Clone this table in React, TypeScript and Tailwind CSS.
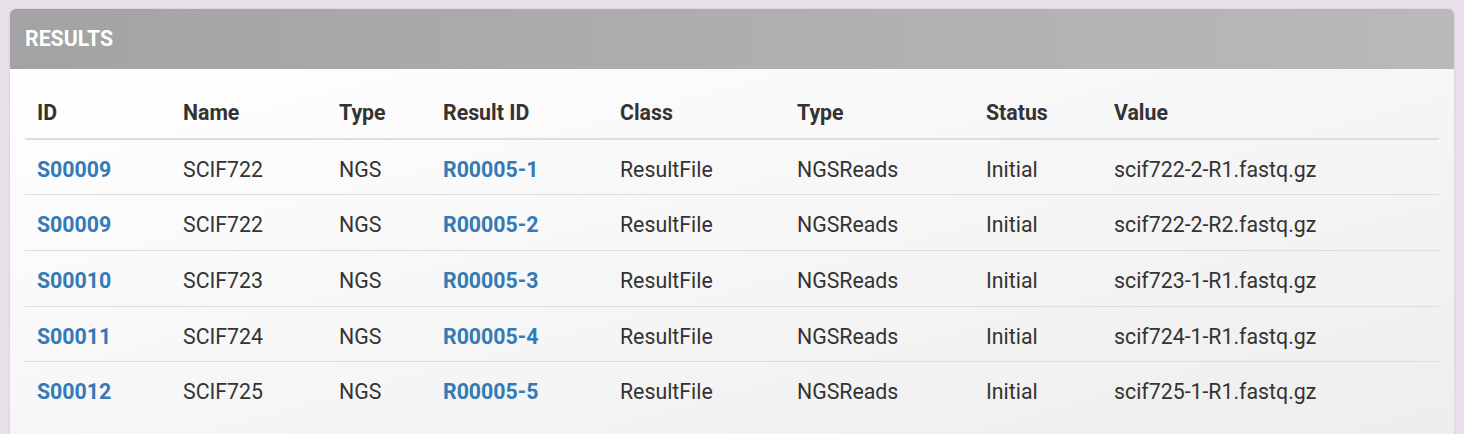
import React from 'react'

interface IResultRow {
    sampleId: string,
    name: string,
    type: string,
    resultId: string,
    className: string,
    resultType: string,
    status: string,
    value: string
}

const rows: IResultRow[] = [
    { sampleId: 'S00009', name: 'SCIF722', type: 'NGS', resultId: 'R00005-1', className: 'ResultFile', resultType: 'NGSReads', status: 'Initial', value: 'scif722-2-R1.fastq.gz' },
    { sampleId: 'S00009', name: 'SCIF722', type: 'NGS', resultId: 'R00005-2', className: 'ResultFile', resultType: 'NGSReads', status: 'Initial', value: 'scif722-2-R2.fastq.gz' },
    { sampleId: 'S00010', name: 'SCIF723', type: 'NGS', resultId: 'R00005-3', className: 'ResultFile', resultType: 'NGSReads', status: 'Initial', value: 'scif723-1-R1.fastq.gz' },
    { sampleId: 'S00011', name: 'SCIF724', type: 'NGS', resultId: 'R00005-4', className: 'ResultFile', resultType: 'NGSReads', status: 'Initial', value: 'scif724-1-R1.fastq.gz' },
    { sampleId: 'S00012', name: 'SCIF725', type: 'NGS', resultId: 'R00005-5', className: 'ResultFile', resultType: 'NGSReads', status: 'Initial', value: 'scif725-1-R1.fastq.gz' },
];

const headers = [
    { label: 'ID', width: 'w-[146px]' },
    { label: 'Name', width: 'w-[156px]' },
    { label: 'Type', width: 'w-[104px]' },
    { label: 'Result ID', width: 'w-[177px]' },
    { label: 'Class', width: 'w-[177px]' },
    { label: 'Type', width: 'w-[189px]' },
    { label: 'Status', width: 'w-[128px]' },
    { label: 'Value', width: '' },
];

const cell = "px-3 pt-[18px] pb-[12px] leading-[24.67px] border-t border-[#dddddd] text-left align-middle whitespace-nowrap";
const link = "text-[#337ab7] font-bold";

const App = () => {
    return (
        <div className="min-h-screen bg-[#e8e1ea] px-[10px] pt-[9px] overflow-hidden" style={{ fontFamily: 'Roboto, "Liberation Sans", sans-serif' }}>
            <div className="rounded-t-[6px] overflow-hidden shadow-[0_0_3px_rgba(0,0,0,0.12)]">
                {/* panel header */}
                <div className="h-[60px] flex items-center px-[15px] bg-gradient-to-r from-[#a3a3a3] to-[#b9b9b9]">
                    <h3 className="text-white font-bold text-[21.3px] uppercase">Results</h3>
                </div>
                {/* panel body */}
                <div className="bg-gradient-to-br from-white to-[#ededed] px-[15px] pt-[14px] pb-[40px]">
                    <table className="w-full border-collapse text-[21.3px] text-[#333333] table-fixed">
                        <thead>
                            <tr>
                                {headers.map((h, i) => (
                                    <th key={i} className={`${h.width} px-3 pt-[17.5px] pb-[12.5px] leading-[24.67px] text-left font-bold border-b-2 border-[#dddddd] whitespace-nowrap`}>
                                        {h.label}
                                    </th>
                                ))}
                            </tr>
                        </thead>
                        <tbody>
                            {rows.map((r) => (
                                <tr key={r.resultId} className="[&:first-child>td]:border-t-0">
                                    <td className={cell}><a className={link}>{r.sampleId}</a></td>
                                    <td className={cell}>{r.name}</td>
                                    <td className={cell}>{r.type}</td>
                                    <td className={cell}><a className={link}>{r.resultId}</a></td>
                                    <td className={cell}>{r.className}</td>
                                    <td className={cell}>{r.resultType}</td>
                                    <td className={cell}>{r.status}</td>
                                    <td className={cell}>{r.value}</td>
                                </tr>
                            ))}
                        </tbody>
                    </table>
                </div>
            </div>
        </div>
    );
};

export default App
